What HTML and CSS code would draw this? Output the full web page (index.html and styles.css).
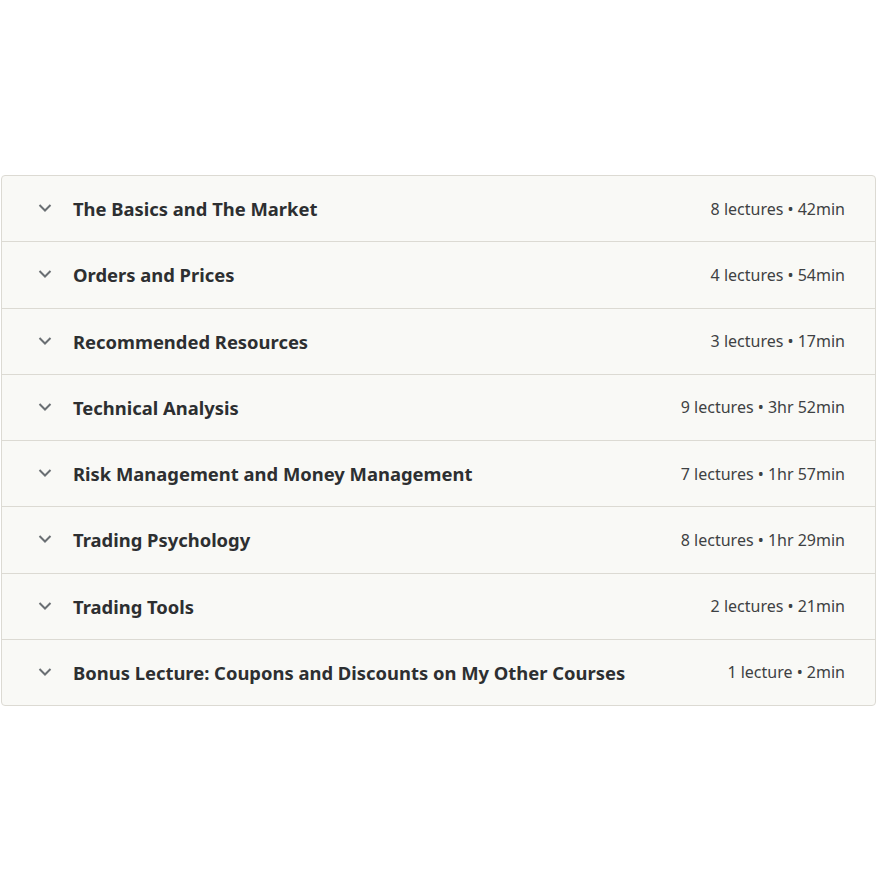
FILE: index.html
```html
<!DOCTYPE html>
<html lang="en">
<head>
    <meta charset="UTF-8">
    <meta name="viewport" content="width=device-width, initial-scale=1.0">
    <title>Course content</title>
    <link rel="stylesheet" href="styles.css">
</head>
<body>

<div class="curriculum">
    <div class="section">
        <span class="chevron"><svg viewBox="0 0 14 8" width="14" height="8"><path d="M1.5 1L7 6.5 12.5 1" fill="none" stroke="currentColor" stroke-width="2"/></svg></span>
        <span class="section-title">The Basics and The Market</span>
        <span class="section-meta">8 lectures • 42min</span>
    </div>
    <div class="section">
        <span class="chevron"><svg viewBox="0 0 14 8" width="14" height="8"><path d="M1.5 1L7 6.5 12.5 1" fill="none" stroke="currentColor" stroke-width="2"/></svg></span>
        <span class="section-title">Orders and Prices</span>
        <span class="section-meta">4 lectures • 54min</span>
    </div>
    <div class="section">
        <span class="chevron"><svg viewBox="0 0 14 8" width="14" height="8"><path d="M1.5 1L7 6.5 12.5 1" fill="none" stroke="currentColor" stroke-width="2"/></svg></span>
        <span class="section-title">Recommended Resources</span>
        <span class="section-meta">3 lectures • 17min</span>
    </div>
    <div class="section">
        <span class="chevron"><svg viewBox="0 0 14 8" width="14" height="8"><path d="M1.5 1L7 6.5 12.5 1" fill="none" stroke="currentColor" stroke-width="2"/></svg></span>
        <span class="section-title">Technical Analysis</span>
        <span class="section-meta">9 lectures • 3hr 52min</span>
    </div>
    <div class="section">
        <span class="chevron"><svg viewBox="0 0 14 8" width="14" height="8"><path d="M1.5 1L7 6.5 12.5 1" fill="none" stroke="currentColor" stroke-width="2"/></svg></span>
        <span class="section-title">Risk Management and Money Management</span>
        <span class="section-meta">7 lectures • 1hr 57min</span>
    </div>
    <div class="section">
        <span class="chevron"><svg viewBox="0 0 14 8" width="14" height="8"><path d="M1.5 1L7 6.5 12.5 1" fill="none" stroke="currentColor" stroke-width="2"/></svg></span>
        <span class="section-title">Trading Psychology</span>
        <span class="section-meta">8 lectures • 1hr 29min</span>
    </div>
    <div class="section">
        <span class="chevron"><svg viewBox="0 0 14 8" width="14" height="8"><path d="M1.5 1L7 6.5 12.5 1" fill="none" stroke="currentColor" stroke-width="2"/></svg></span>
        <span class="section-title">Trading Tools</span>
        <span class="section-meta">2 lectures • 21min</span>
    </div>
    <div class="section">
        <span class="chevron"><svg viewBox="0 0 14 8" width="14" height="8"><path d="M1.5 1L7 6.5 12.5 1" fill="none" stroke="currentColor" stroke-width="2"/></svg></span>
        <span class="section-title">Bonus Lecture: Coupons and Discounts on My Other Courses</span>
        <span class="section-meta">1 lecture • 2min</span>
    </div>
</div>

</body>
</html>
```

FILE: styles.css
```css
body {
    font-family: "Noto Sans", "Open Sans", Arial, sans-serif;
    background-color: #fff;
    color: #2d2f31;
    margin: 0;
    padding: 0;
}
.curriculum {
    margin: 175px 4px 0 1px;
    border: 1px solid #dcdad3;
    border-radius: 4px;
    background-color: #f9f9f6;
    overflow: hidden;
}
.section {
    display: flex;
    align-items: center;
    height: 65.25px;
    padding: 0 30px 0 36px;
    border-bottom: 1px solid #dcdad3;
}
.section:last-child {
    border-bottom: none;
}
.chevron {
    display: flex;
    width: 14px;
    color: #6a6f73;
    margin-right: 21px;
    margin-top: -1px;
}
.section-title {
    flex: 1;
    font-size: 18.4px;
    font-weight: 700;
}
.section-meta {
    font-size: 16px;
    color: #3e4143;
}
```
